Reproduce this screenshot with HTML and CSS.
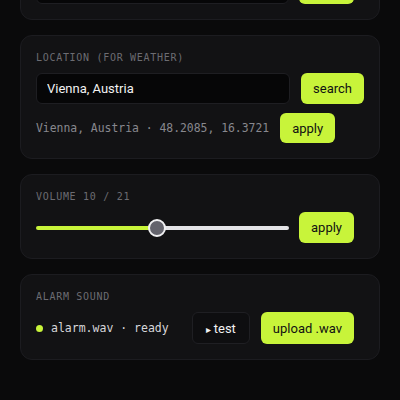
FILE: index.html
```html
<!DOCTYPE html>
<html lang="en">
<head>
    <meta charset="UTF-8">
    <meta name="viewport" content="width=device-width, initial-scale=1.0">
    <title>Clock Settings</title>
    <link rel="stylesheet" href="styles.css">
</head>
<body>
    <div class="page">
        <!-- Timezone (scrolled mostly out of view) -->
        <section class="card">
            <div class="card-label">Timezone</div>
            <div class="row row-short">
                <input type="text" class="text-input" value="Europe/Vienna">
                <button class="btn">apply</button>
            </div>
        </section>

        <!-- Location -->
        <section class="card">
            <div class="card-label">Location (for weather)</div>
            <div class="row">
                <input type="text" class="text-input" value="Vienna, Austria">
                <button class="btn">search</button>
            </div>
            <div class="row">
                <span class="mono-info">Vienna, Austria · 48.2085, 16.3721</span>
                <button class="btn btn-small">apply</button>
            </div>
        </section>

        <!-- Volume -->
        <section class="card">
            <div class="card-label">Volume <span id="volValue">10</span> / 21</div>
            <div class="row row-short">
                <input type="range" class="slider" id="volume" min="0" max="21" value="10" style="--fill: 47.8%">
                <button class="btn">apply</button>
            </div>
        </section>

        <!-- Alarm sound -->
        <section class="card">
            <div class="card-label">Alarm sound</div>
            <div class="row row-short row-tall">
                <span class="status-dot"></span>
                <span class="mono-status">alarm.wav · ready</span>
                <button class="btn btn-ghost push"><span class="play">▸</span> test</button>
                <button class="btn">upload .wav</button>
            </div>
        </section>
    </div>

    <script>
        // keep the label and the filled part of the track in sync
        const volume = document.getElementById('volume');
        volume.addEventListener('input', function() {
            document.getElementById('volValue').textContent = this.value;
            const pct = (this.value - this.min) / (this.max - this.min);
            // thumb is 18px wide
            const fill = (9 + pct * (this.offsetWidth - 18)) / this.offsetWidth * 100;
            this.style.setProperty('--fill', fill + '%');
        });
    </script>
</body>
</html>
```

FILE: styles.css
```css
* {
    margin: 0;
    padding: 0;
    box-sizing: border-box;
}

body {
    background-color: #0a0a0b;
    font-family: Roboto, "Liberation Sans", sans-serif;
    color: #f2f2f2;
}

.page {
    display: flex;
    flex-direction: column;
    gap: 15px;
    padding: 0 20px 40px;
    /* page is scrolled: first card sits mostly above the viewport */
    margin-top: -65px;
}

.card {
    background-color: #121214;
    border: 1px solid #1c1c20;
    border-radius: 12px;
    padding: 15px;
    display: flex;
    flex-direction: column;
    gap: 9px;
}

.card-label {
    font-family: "DejaVu Sans Mono", monospace;
    font-size: 10px;
    line-height: 13px;
    letter-spacing: 0.7px;
    text-transform: uppercase;
    color: #6c6c72;
}

.row {
    display: flex;
    align-items: center;
    gap: 11px;
}

.row-short {
    padding-right: 10px;
    gap: 10px;
}

.row-tall {
    gap: 11px;
}

.row-tall .btn {
    height: 32px;
}

.text-input {
    flex: 1;
    min-width: 0;
    height: 31px;
    padding: 0 10px;
    background-color: #060607;
    border: 1px solid #1e1e22;
    border-radius: 6px;
    color: #f2f2f2;
    font-family: Roboto, "Liberation Sans", sans-serif;
    font-size: 13px;
    outline: none;
}

.btn {
    height: 31px;
    padding: 0 12px;
    background-color: #c8f43a;
    color: #111112;
    border: none;
    border-radius: 6px;
    font-family: Roboto, "Liberation Sans", sans-serif;
    font-size: 13px;
    font-weight: 400;
    cursor: pointer;
    flex-shrink: 0;
}

.btn-small {
    height: 30px;
}

.btn-ghost {
    background-color: #0e0e10;
    border: 1px solid #1f1f23;
    color: #f2f2f2;
    padding: 0 13px;
}

.play {
    font-size: 10px;
}

.push {
    margin-left: auto;
}

.mono-info {
    font-family: "DejaVu Sans Mono", monospace;
    font-size: 11.4px;
    color: #88888e;
    white-space: nowrap;
}

.mono-status {
    font-family: "DejaVu Sans Mono", monospace;
    font-size: 11.5px;
    color: #d6d6da;
    white-space: nowrap;
    margin-left: -3px;
}

.status-dot {
    width: 7px;
    height: 7px;
    border-radius: 50%;
    background-color: #c8f43a;
    flex-shrink: 0;
}

/* volume slider */
.slider {
    -webkit-appearance: none;
    appearance: none;
    flex: 1;
    min-width: 0;
    height: 18px;
    background: transparent;
    cursor: pointer;
}

.slider::-webkit-slider-runnable-track {
    height: 4px;
    border-radius: 2px;
    background: linear-gradient(to right, #c8f43a 0, #c8f43a var(--fill), #e4e4e7 var(--fill), #e4e4e7 100%);
}

.slider::-webkit-slider-thumb {
    -webkit-appearance: none;
    width: 18px;
    height: 18px;
    margin-top: -7px;
    border-radius: 50%;
    background-color: #64646d;
    border: 2px solid #f0f0f2;
}
```
